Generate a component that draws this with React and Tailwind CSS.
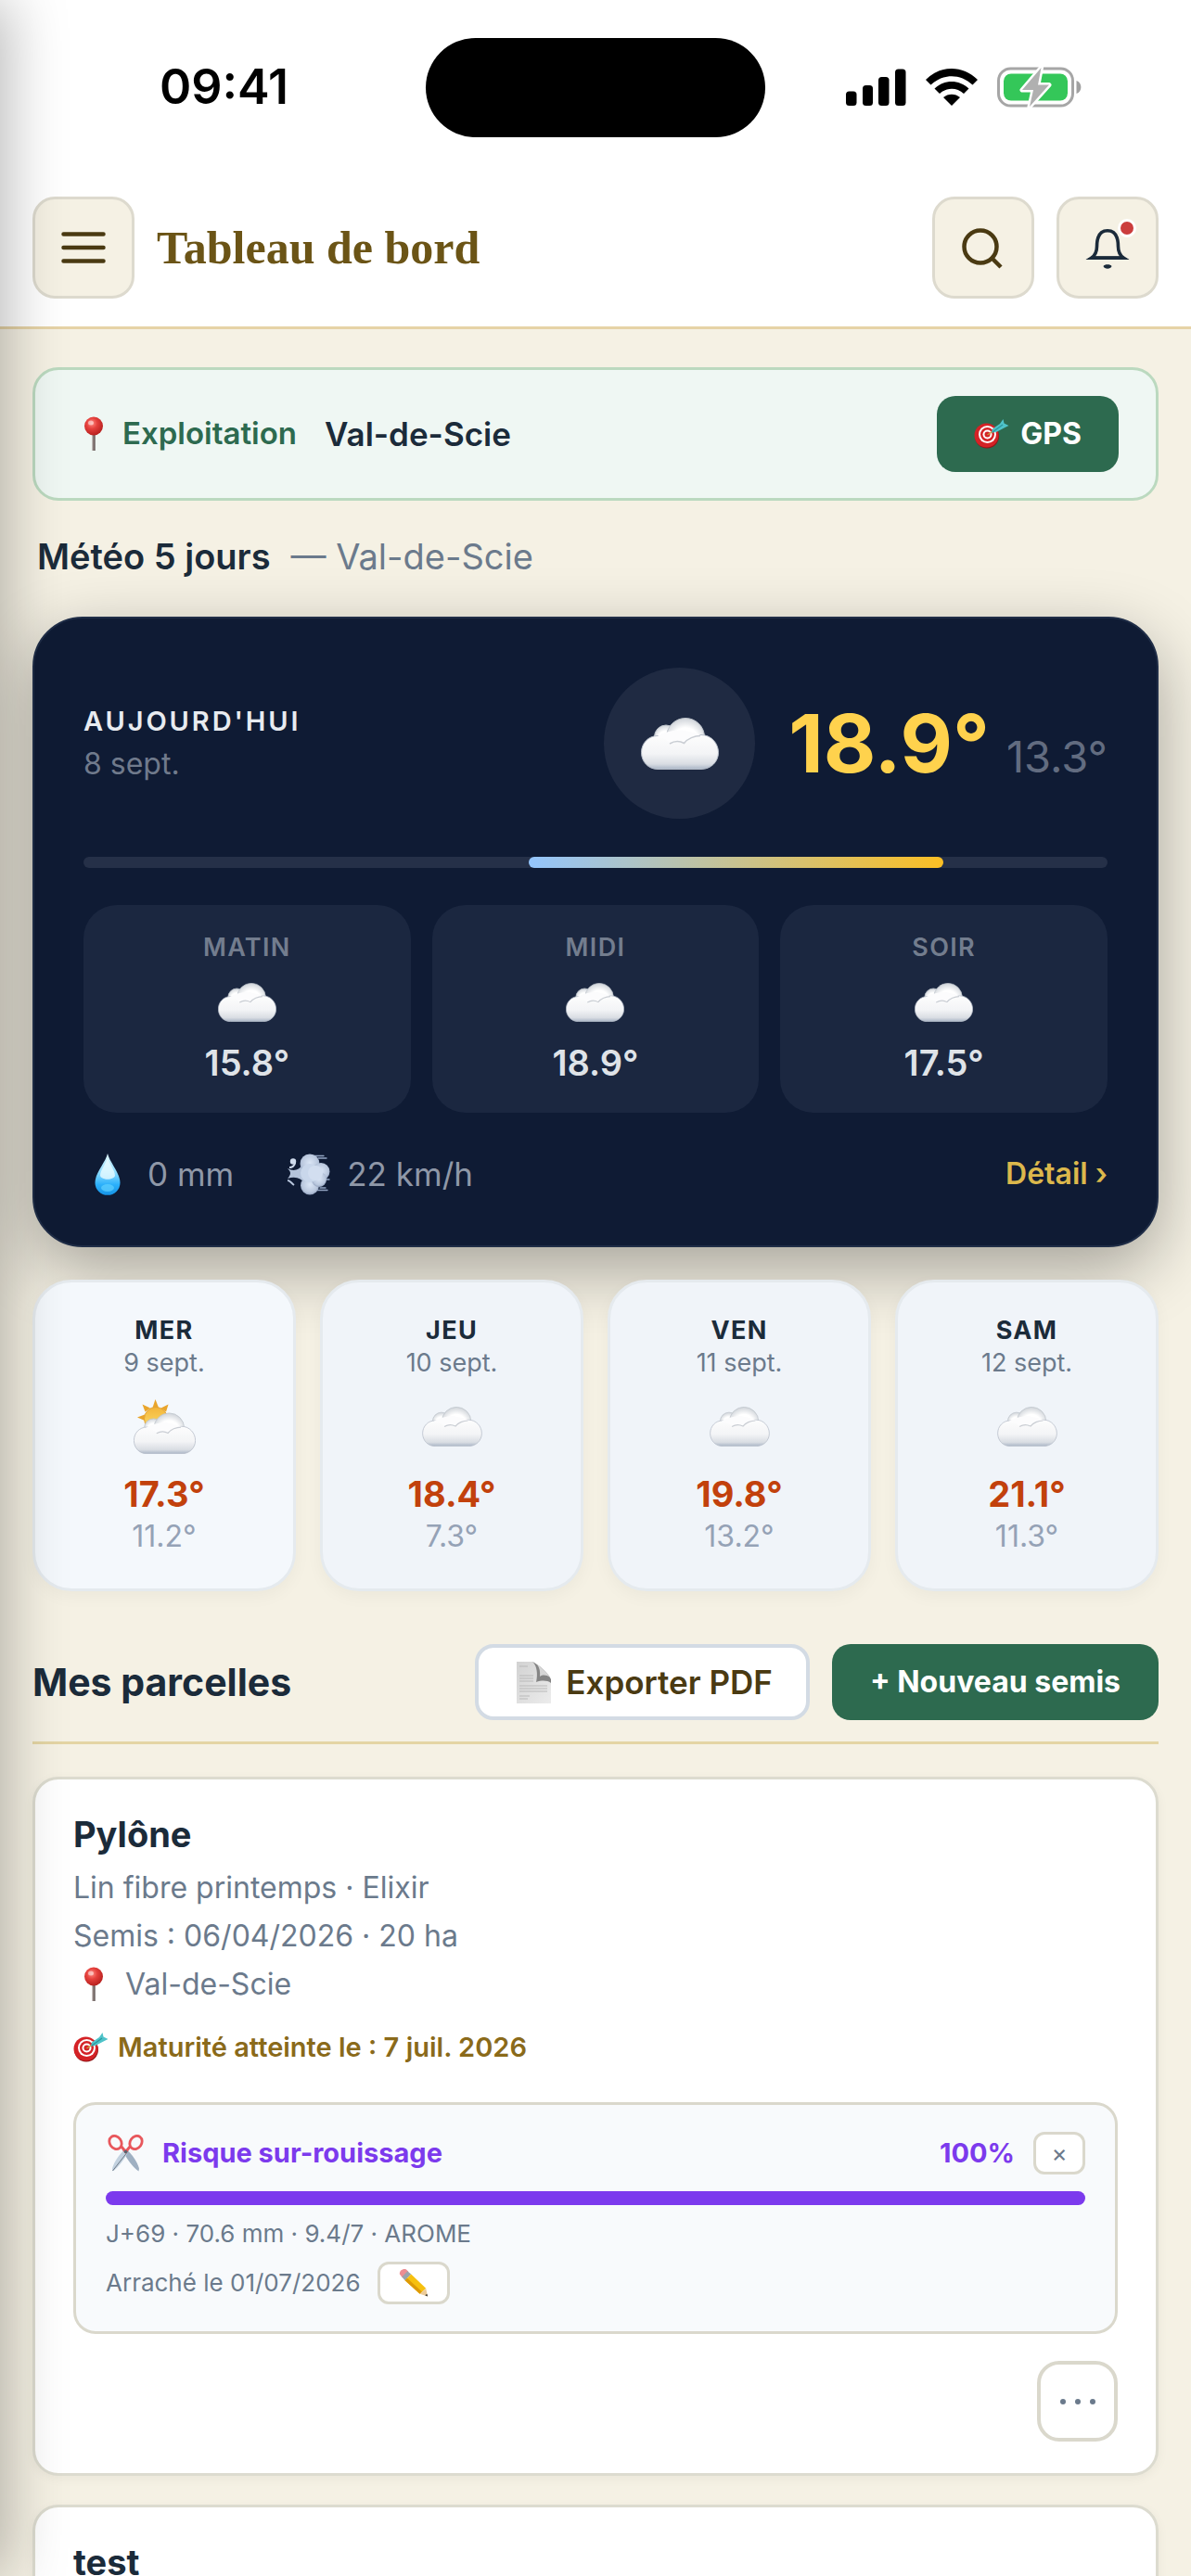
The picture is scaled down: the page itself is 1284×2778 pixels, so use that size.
import React from "react";

const slots = [
  { label: "MATIN", temp: "15.8°" },
  { label: "MIDI", temp: "18.9°" },
  { label: "SOIR", temp: "17.5°" },
];

const days = [
  { day: "MER", date: "9 sept.", high: "17.3°", low: "11.2°", sunny: true },
  { day: "JEU", date: "10 sept.", high: "18.4°", low: "7.3°" },
  { day: "VEN", date: "11 sept.", high: "19.8°", low: "13.2°" },
  { day: "SAM", date: "12 sept.", high: "21.1°", low: "11.3°" },
];

function Gradients() {
  return (
    <svg width="0" height="0" className="absolute" aria-hidden="true">
      <defs>
        <linearGradient id="cloudBody" x1="0" y1="0" x2="0" y2="1">
          <stop offset="0" stopColor="#fdfdfd" />
          <stop offset="0.55" stopColor="#f3f4f6" />
          <stop offset="0.85" stopColor="#d9dde3" />
          <stop offset="1" stopColor="#a9b5c6" />
        </linearGradient>
        <radialGradient id="cloudPuff" cx="0.5" cy="0.6" r="0.58">
          <stop offset="0.6" stopColor="#ffffff" />
          <stop offset="1" stopColor="#d3d7dc" />
        </radialGradient>
        <radialGradient id="pinHead" cx="0.4" cy="0.35" r="0.65">
          <stop offset="0" stopColor="#ff8a80" />
          <stop offset="0.45" stopColor="#e5403c" />
          <stop offset="1" stopColor="#b8211f" />
        </radialGradient>
        <linearGradient id="dropBody" x1="0" y1="0" x2="0" y2="1">
          <stop offset="0" stopColor="#dff6ff" />
          <stop offset="0.45" stopColor="#8edcff" />
          <stop offset="0.75" stopColor="#2bb0fb" />
          <stop offset="1" stopColor="#1593e6" />
        </linearGradient>
        <radialGradient id="windPuff" cx="0.5" cy="0.45" r="0.6">
          <stop offset="0" stopColor="#dbe6f6" />
          <stop offset="0.7" stopColor="#b9c7dd" />
          <stop offset="1" stopColor="#8696b4" />
        </radialGradient>
        <linearGradient id="sunBody" x1="0" y1="0" x2="0" y2="1">
          <stop offset="0" stopColor="#f3b53a" />
          <stop offset="1" stopColor="#fde06b" />
        </linearGradient>
        <linearGradient id="sheet" x1="0" y1="0" x2="1" y2="1">
          <stop offset="0" stopColor="#d2d2d2" />
          <stop offset="1" stopColor="#ececec" />
        </linearGradient>
      </defs>
    </svg>
  );
}

function CloudShape() {
  return (
    <g>
      <circle cx="27" cy="20.500" r="12.500" fill="url(#cloudPuff)" stroke="#bfc5cc" strokeWidth="1" />
      <circle cx="48" cy="21" r="20.500" fill="url(#cloudPuff)" stroke="#bfc5cc" strokeWidth="1" />
      <path
        d="M18 19.500C8 19.500 .5 27.500 .5 37.500S8 55.500 18 55.500H65C75.500 55.500 83.500 47.500 83.500 37.500S75.500 18.500 65 18.500C57 18.500 50 22 46.500 27C42 24.500 36 24.500 32 27C29.500 22 24.500 19.500 18 19.500Z"
        fill="url(#cloudBody)"
        stroke="#b7bec9"
        strokeWidth="1"
      />
      <path d="M15 22C22 15 40 12 48 14C56 16 64 17 66 21C58 20 50 23 46 28C41 26 34 26 31 28C27 22 21 21 15 22Z" fill="#fcfcfd" />
      <path d="M31 28C36 25 42 25 46.500 27.500C50 22.500 58 19.500 64 19.500" fill="none" stroke="#c9cdd3" strokeWidth="1.500" />
    </g>
  );
}

function Cloud({ className }) {
  return (
    <svg viewBox="0 0 84 56" className={className} aria-hidden="true">
      <CloudShape />
    </svg>
  );
}

function SunCloud({ className }) {
  return (
    <svg viewBox="0 0 67 59" className={className} aria-hidden="true">
      <g fill="#e9a52b">
        <path d="M23.500 0 27 9H20.500Z" />
        <path d="M9.500 5.500 18 9.500 12.500 13.500Z" />
        <path d="M37.500 5.500 35 13.500 29.500 9.500Z" />
        <path d="M4 19.500 12 16.500V23Z" />
      </g>
      <circle cx="24" cy="21" r="12.500" fill="url(#sunBody)" stroke="#e3a233" strokeWidth="1" />
      <g transform="translate(0 14.500) scale(0.798)">
        <CloudShape />
      </g>
    </svg>
  );
}

function Pin({ className }) {
  return (
    <svg viewBox="0 0 40 40" className={className} aria-hidden="true">
      <path d="M18.500 18H21.500V38H18.500Z" fill="#8d7f7c" />
      <path d="M20.500 18H21.500V38H20.500Z" fill="#5f5654" />
      <circle cx="20" cy="11.500" r="10" fill="url(#pinHead)" />
      <ellipse cx="17" cy="8" rx="3" ry="2.500" fill="#fff" opacity="0.500" />
    </svg>
  );
}

function Target({ className }) {
  return (
    <svg viewBox="0 0 38 32" className={className} aria-hidden="true">
      <circle cx="14" cy="18.500" r="13" fill="#8f1416" />
      <circle cx="13.500" cy="17.500" r="13" fill="#d42226" />
      <circle cx="14.500" cy="16.500" r="9.500" fill="#fff" />
      <circle cx="14.500" cy="16.500" r="7.500" fill="#d42226" />
      <circle cx="14.500" cy="16.500" r="5" fill="#fff" />
      <circle cx="14.500" cy="16.500" r="3" fill="#d42226" />
      <path d="M14.500 17 22 12" stroke="#c89a3a" strokeWidth="1.500" />
      <path d="M19 14.500 20 10.500 28 5 31.500 0 32.500 4.500 37.500 7 32.500 9.500 24 14Z" fill="#4fc3c9" />
      <path d="M20 14 31 6" stroke="#2b969e" strokeWidth="1.200" />
    </svg>
  );
}

function Droplet({ className }) {
  return (
    <svg viewBox="0 0 28 45" className={className} aria-hidden="true">
      <path d="M14 0C16 9 27.500 21 27.500 31.500A13.500 13.300 0 0 1 .5 31.500C.5 21 12 9 14 0Z" fill="url(#dropBody)" />
      <path d="M14 3C15 11 22 17 22 24C20 29 8 29 6 24C6 17 13 11 14 3Z" fill="#e9fbff" opacity="0.800" />
      <ellipse cx="14" cy="37" rx="7" ry="4" fill="#5fd0ff" opacity="0.700" />
    </svg>
  );
}

function Wind({ className }) {
  return (
    <svg viewBox="0 0 47 45" className={className} aria-hidden="true">
      <g stroke="#93a5c2" strokeWidth="1.300" fill="none" strokeLinecap="round">
        <path d="M30 2.500H40M34 5H43" />
        <path d="M36 37H42M28 39.500H44M40 28H46" />
      </g>
      <path d="M1 16C8 20 14 17 16 13L28 20 18 30C12 25 7 25 1 27C5 22 5 20 1 16Z" fill="#b4c3da" />
      <circle cx="7" cy="8.500" r="3.200" fill="#cfdbed" />
      <path d="M9 10C9 13 6 15 3 15" stroke="#cfdbed" strokeWidth="2" fill="none" />
      <path d="M1 29C4 29 5 32 8 34" stroke="#b9c7dd" strokeWidth="2" fill="none" />
      <circle cx="25" cy="11" r="10.500" fill="url(#windPuff)" />
      <circle cx="37" cy="19.500" r="9.500" fill="url(#windPuff)" />
      <circle cx="25" cy="34.500" r="10" fill="url(#windPuff)" />
      <circle cx="35" cy="28" r="8" fill="url(#windPuff)" />
      <circle cx="25" cy="21" r="10" fill="#c9d7eb" />
      <circle cx="31" cy="21" r="8" fill="#d2def0" />
    </svg>
  );
}

function Sheet({ className }) {
  return (
    <svg viewBox="0 0 37 45" className={className} aria-hidden="true">
      <path d="M0 0H17C21 1 22 4 22 8L37 23V45H0Z" fill="url(#sheet)" />
      <path d="M17 0C25 4 34 12 37 19V23C33 20 27 20 21 22C23 14 22 4 17 0Z" fill="#858585" />
      <path d="M22 3C28 7 34 13 36 17C32 14 28 14 25 16C25.500 11 25 7 22 3Z" fill="#d6d6d6" />
      <g stroke="#b9b9b9" strokeWidth="1">
        <path d="M3 5H12M3 15H18M3 18H18M3 21H18M3 26H33M3 29H33M3 32H33M3 37H14M3 40H12" />
      </g>
    </svg>
  );
}

function Scissors({ className }) {
  return (
    <svg viewBox="0 0 39 40" className={className} aria-hidden="true">
      <path d="M16 17 20 15.500C26 21 32 29 34 36.500L33.500 39.500C27 35 21 27 16 17Z" fill="#9fb0c2" />
      <path d="M23 17 19 15.500C13 21 7 29 5 36.500L5.500 39.500C12 35 18 27 23 17Z" fill="#c3d2e0" />
      <path d="M5.500 39 22 18" stroke="#6f7a86" strokeWidth="1" />
      <g fill="none" stroke="#e8575c" strokeWidth="2.800">
        <ellipse cx="8.500" cy="8.500" rx="6.200" ry="7.500" transform="rotate(-35 8.500 8.500)" />
        <ellipse cx="30.500" cy="8.500" rx="6.200" ry="7.500" transform="rotate(35 30.500 8.500)" />
        <path d="M14.500 12.500 19.500 18.500 24.500 12.500" strokeWidth="3" />
      </g>
      <circle cx="19.500" cy="18.500" r="1.800" fill="#59636e" />
    </svg>
  );
}

function Pencil({ className }) {
  return (
    <svg viewBox="0 0 34 34" className={className} aria-hidden="true">
      <path d="M1 7C0 3 5 0 8.500 1.500L11 4 4 11Z" fill="#ec8d92" />
      <path d="M3.500 10 10 3.500 14 7 7 14Z" fill="#9aa3ab" />
      <path d="M7 14 14 7 31 23 24 29.500Z" fill="#f6c00f" />
      <path d="M7 14 9.500 11.500 26.500 27 24 29.500Z" fill="#dd9a07" />
      <path d="M24 29.500 31 23 33 32.500Z" fill="#eccb98" />
      <path d="M30 31.200 32.300 29.500 33 32.500Z" fill="#2d2d2d" />
    </svg>
  );
}

function StatusBar() {
  return (
    <div className="grid h-[188px] grid-cols-[1fr_366px_1fr] items-center">
      <div className="pl-6 text-center text-[52px] font-semibold leading-[60px] text-black">09:41</div>
      <div className="h-[107px] rounded-full bg-black" />
      <div className="flex items-center justify-center gap-[21px] pr-8">
        <svg viewBox="0 0 65 40" className="h-10 w-[65px]" aria-hidden="true">
          <rect x="0" y="24.500" width="11.500" height="15.500" rx="3.500" />
          <rect x="18" y="18" width="11" height="22" rx="3.500" />
          <rect x="35" y="9" width="11.500" height="31" rx="3.500" />
          <rect x="53" y="0.500" width="11.500" height="39.500" rx="3.500" />
        </svg>
        <svg viewBox="0 0 56 40" className="h-10 w-14" aria-hidden="true">
          <path d="M0 12C16-4 40-4 56 12L50.500 17.500C37.500 5 18.500 5 5.500 17.500Z" />
          <path d="M9.500 21.500C20 11.500 36 11.500 46.500 21.500L41 27C33.500 20 22.500 20 15 27Z" />
          <path d="M19 31C24 26.500 32 26.500 37 31L28 40Z" />
        </svg>
        <svg viewBox="0 0 91 44" className="h-11 w-[91px]" aria-hidden="true">
          <rect x="1.500" y="2" width="80" height="40" rx="13" fill="none" stroke="#a6a6a6" strokeWidth="3" />
          <path d="M85.500 15C92 17 92 27 85.500 29Z" fill="#a0a0a0" />
          <rect x="7" y="7.500" width="69" height="29" rx="8" fill="#34c759" />
          <path d="M47.500 1 27 25H39L35 43 56 19.500H44Z" fill="#b0b0b0" stroke="#fff" strokeWidth="5" strokeLinejoin="round" paintOrder="stroke" />
        </svg>
      </div>
    </div>
  );
}

const iconButton =
  "relative flex h-[110px] w-[110px] items-center justify-center rounded-[24px] border-[3px] border-[#dddace] bg-[#f5f1e4]";

function Header() {
  return (
    <header className="border-b-[3px] border-[#e6d3a6] bg-white">
      <StatusBar />
      <div className="flex items-center px-[35px] pb-[30px] pt-6">
        <button type="button" aria-label="Menu" className={iconButton}>
          <svg viewBox="0 0 48 36" className="h-9 w-12" aria-hidden="true">
            <g stroke="#4a3a12" strokeWidth="4.500" strokeLinecap="round">
              <path d="M2.500 3.500H45.500M2.500 18H45.500M2.500 32.500H45.500" />
            </g>
          </svg>
        </button>
        <h1 className="ml-6 flex-1 font-['Liberation_Serif',serif] text-[50px] font-bold leading-[60px] text-[#6b5416]">
          Tableau de bord
        </h1>
        <button type="button" aria-label="Rechercher" className={iconButton}>
          <svg viewBox="0 0 48 48" className="h-12 w-12" fill="none" stroke="#4a3a12" strokeWidth="4.500" aria-hidden="true">
            <circle cx="21" cy="23" r="17.500" />
            <path d="M33.500 35.500 43 45" />
          </svg>
        </button>
        <button type="button" aria-label="Notifications" className={iconButton + " ml-6"}>
          <svg viewBox="0 0 48 48" className="h-12 w-12" aria-hidden="true">
            <path
              d="M12.500 23C12.500 12 16.500 5.800 24 5.800S35.500 12 35.500 23C35.500 29 38 33 41.500 35.300H6.500C10 33 12.500 29 12.500 23Z"
              fill="none"
              stroke="#1b2b3a"
              strokeWidth="3.600"
            />
            <path d="M1 37 8 33.200H40L47 37Z" fill="#1b2b3a" />
            <path d="M19.500 44C20.500 41.500 27.500 41.500 28.500 44C27.500 47.500 20.500 47.500 19.500 44Z" fill="#1b2b3a" />
          </svg>
          <span className="absolute right-[21px] top-[21px] h-5 w-5 rounded-full border-[3px] border-white bg-[#cb3d3d]" />
        </button>
      </div>
    </header>
  );
}

function TodayCard() {
  return (
    <section className="mt-[41px] rounded-[54px] border-2 border-[#1f2d47] bg-[#0f1b34] px-[53px] pb-[51px] pt-[53px] shadow-[0_24px_72px_rgba(0,0,0,0.33)]">
      <div className="flex items-center">
        <div className="flex-1">
          <div className="text-[29px] font-semibold leading-[44px] tracking-widest text-[#e8ebf0]">AUJOURD'HUI</div>
          <div className="text-[32px] leading-[48px] text-[#707a8c]">8 sept.</div>
        </div>
        <div className="mr-9 flex h-[163px] w-[163px] items-center justify-center rounded-full bg-[#1f2a42]">
          <Cloud className="h-14 w-[84px]" />
        </div>
        <div className="flex items-baseline gap-[18px]">
          <span className="text-[87px] font-bold leading-[104px] text-[#ffd24d]">18.9°</span>
          <span className="text-[47px] leading-[60px] text-[#626c80]">13.3°</span>
        </div>
      </div>
      <div className="mt-[41px] h-3 overflow-hidden rounded-full bg-[#253048] pl-[43.5%] pr-[16%]">
        <div className="h-3 rounded-full bg-[linear-gradient(90deg,#93c5fd,#fbbf24)]" />
      </div>
      <div className="mt-10 grid grid-cols-3 gap-[23px]">
        {slots.map((s) => (
          <div key={s.label} className="flex flex-col items-center rounded-[36px] bg-[#1b2740] pb-[30px] pt-7">
            <div className="text-[27px] font-semibold leading-9 tracking-wider text-[#737d8e]">{s.label}</div>
            <Cloud className="mt-5 h-[42px] w-[63px]" />
            <div className="mt-5 text-[38px] font-semibold leading-[48px] text-[#dfe3e8]">{s.temp}</div>
          </div>
        ))}
      </div>
      <div className="mt-10 flex h-[52px] items-center text-[35px] text-[#8f98a8]">
        <Droplet className="ml-3 h-[45px] w-7" />
        <span className="ml-[29px]">0 mm</span>
        <Wind className="ml-[57px] h-[45px] w-[47px]" />
        <span className="ml-[18px]">22 km/h</span>
        <a href="#detail" className="ml-auto text-[32px] font-semibold text-[#dcb84c]">
          Détail ›
        </a>
      </div>
    </section>
  );
}

function DayCard({ day, date, high, low, sunny }) {
  return (
    <div
      className={
        (sunny ? "bg-[#f4f8fc]" : "bg-[#f0f4f9]") +
        " flex flex-col items-center rounded-[42px] border-[3px] border-[#e5eaee] pb-[34px] pt-[34px] shadow-[0_6px_18px_rgba(0,0,0,0.04)]"
      }
    >
      <div className="text-[27px] font-bold leading-9 tracking-wider text-[#1b2b3a]">{day}</div>
      <div className="text-[27px] leading-[34px] text-[#6b7a8c]">{date}</div>
      <div className="mt-4 flex h-[70px] items-center justify-center">
        {sunny ? <SunCloud className="h-[59px] w-[67px]" /> : <Cloud className="h-[43px] w-[65px]" />}
      </div>
      <div className="mt-[14px] text-[38px] font-bold leading-[48px] text-[#c2410c]">{high}</div>
      <div className="text-[32px] leading-[44px] text-[#95a2b6]">{low}</div>
    </div>
  );
}

const plotCard =
  "rounded-[28px] border-[3px] border-[#dcdbcf] bg-white px-[41px] pb-[34px] pt-[33px] shadow-[0_3px_12px_rgba(0,0,0,0.05)]";

function RiskPanel() {
  return (
    <div className="mt-[37px] rounded-[24px] border-[3px] border-[#dad8cc] bg-[#f8fafc] px-[32px] py-[29px]">
      <div className="flex items-center">
        <Scissors className="ml-[2px] h-10 w-[39px]" />
        <span className="ml-5 flex-1 text-[29px] font-bold leading-10 text-[#7c3aed]">Risque sur-rouissage</span>
        <span className="text-[29px] font-bold leading-10 text-[#7c3aed]">100%</span>
        <button
          type="button"
          aria-label="Fermer"
          className="ml-5 h-[46px] w-14 rounded-xl border-[3px] border-[#dad8cc] bg-white text-[26px] leading-9 text-[#6b7a8c]"
        >
          ×
        </button>
      </div>
      <div className="mt-[18px] h-[15px] rounded-full bg-[#7c3aed]" role="progressbar" aria-valuenow={100} aria-label="Risque sur-rouissage" />
      <div className="mt-[13px] text-[26px] leading-9 text-[#6b7a8c]">J+69 · 70.6 mm · 9.4/7 · AROME</div>
      <div className="mt-3 flex items-center text-[26px] leading-9 text-[#6b7a8c]">
        Arraché le 01/07/2026
        <button
          type="button"
          aria-label="Modifier"
          className="ml-[18px] flex h-[46px] w-[78px] items-center justify-center rounded-xl border-[3px] border-[#dad8cc] bg-white"
        >
          <Pencil className="h-8 w-8" />
        </button>
      </div>
    </div>
  );
}

export default function App() {
  return (
    <div className="relative flex h-screen flex-col overflow-hidden bg-[#f5f1e4] font-['Inter',sans-serif] text-[#1b2b3a]">
      <Gradients />
      <Header />
      <main className="min-h-0 flex-1 overflow-y-auto px-[35px] pt-[41px] [scrollbar-width:none]">
        <section className="flex items-center rounded-[28px] border-[3px] border-[#bbd9bf] bg-[#eff7f3] px-[40px] py-7">
          <Pin className="ml-[3px] h-10 w-10" />
          <span className="ml-[11px] text-[33px] font-semibold text-[#2d6a4f]">Exploitation</span>
          <span className="ml-[30px] flex-1 text-[35px] font-semibold">Val-de-Scie</span>
          <button
            type="button"
            className="flex h-[82px] items-center gap-3 rounded-[20px] bg-[#2d6a4f] px-10 text-[32px] font-bold text-white"
          >
            <Target className="h-8 w-[38px]" />
            GPS
          </button>
        </section>

        <h2 className="mt-9 flex gap-[22px] pl-[5px] text-[38px] font-semibold leading-[48px]">
          Météo 5 jours
          <span className="font-normal text-[#6b7a8c]">— Val-de-Scie</span>
        </h2>

        <TodayCard />

        <section className="mt-[35px] grid grid-cols-4 gap-[26px]">
          {days.map((d) => (
            <DayCard key={d.day} {...d} />
          ))}
        </section>

        <section className="mt-[57px] flex items-center border-b-[3px] border-[#e4d5a4] pb-[23px]">
          <h2 className="flex-1 text-[41px] font-bold leading-[48px]">Mes parcelles</h2>
          <button
            type="button"
            className="flex h-[82px] items-center gap-4 rounded-[20px] border-4 border-[#d3dbe4] bg-white pl-[41px] pr-9 text-[35px] font-semibold text-[#4a3a12]"
          >
            <Sheet className="h-[45px] w-[37px]" />
            Exporter PDF
          </button>
          <button type="button" className="ml-6 h-[82px] rounded-[20px] bg-[#2d6a4f] px-[41px] text-[32px] font-bold text-white">
            + Nouveau semis
          </button>
        </section>

        <article className={plotCard + " mt-[35px]"}>
          <h3 className="text-[38px] font-bold leading-[52px]">Pylône</h3>
          <div className="mt-[6px] text-[32px] leading-[52px] text-[#6b7a8c]">
            <p>Lin fibre printemps · Elixir</p>
            <p>Semis : 06/04/2026 · 20 ha</p>
            <p className="flex items-center gap-[14px]">
              <Pin className="ml-[2px] h-10 w-10" />
              Val-de-Scie
            </p>
          </div>
          <p className="mt-5 flex items-center gap-[10px] text-[29px] font-semibold leading-[44px] text-[#8a6a1a]">
            <Target className="h-8 w-[38px]" />
            Maturité atteinte le : 7 juil. 2026
          </p>
          <RiskPanel />
          <div className="mt-[29px] flex justify-end">
            <button
              type="button"
              aria-label="Plus d'options"
              className="flex h-[87px] w-[87px] items-center justify-center gap-[10px] rounded-[24px] border-4 border-[#dad8cc] bg-white"
            >
              <span className="h-[6px] w-[6px] rounded-full bg-[#6b7a8c]" />
              <span className="h-[6px] w-[6px] rounded-full bg-[#6b7a8c]" />
              <span className="h-[6px] w-[6px] rounded-full bg-[#6b7a8c]" />
            </button>
          </div>
        </article>

        <article className={plotCard + " mt-[31px]"}>
          <h3 className="text-[38px] font-bold leading-[52px]">test</h3>
        </article>
      </main>
      <div className="pointer-events-none absolute inset-y-0 right-full w-72 shadow-[8px_0_60px_rgba(0,0,0,0.28)]" />
    </div>
  );
}
